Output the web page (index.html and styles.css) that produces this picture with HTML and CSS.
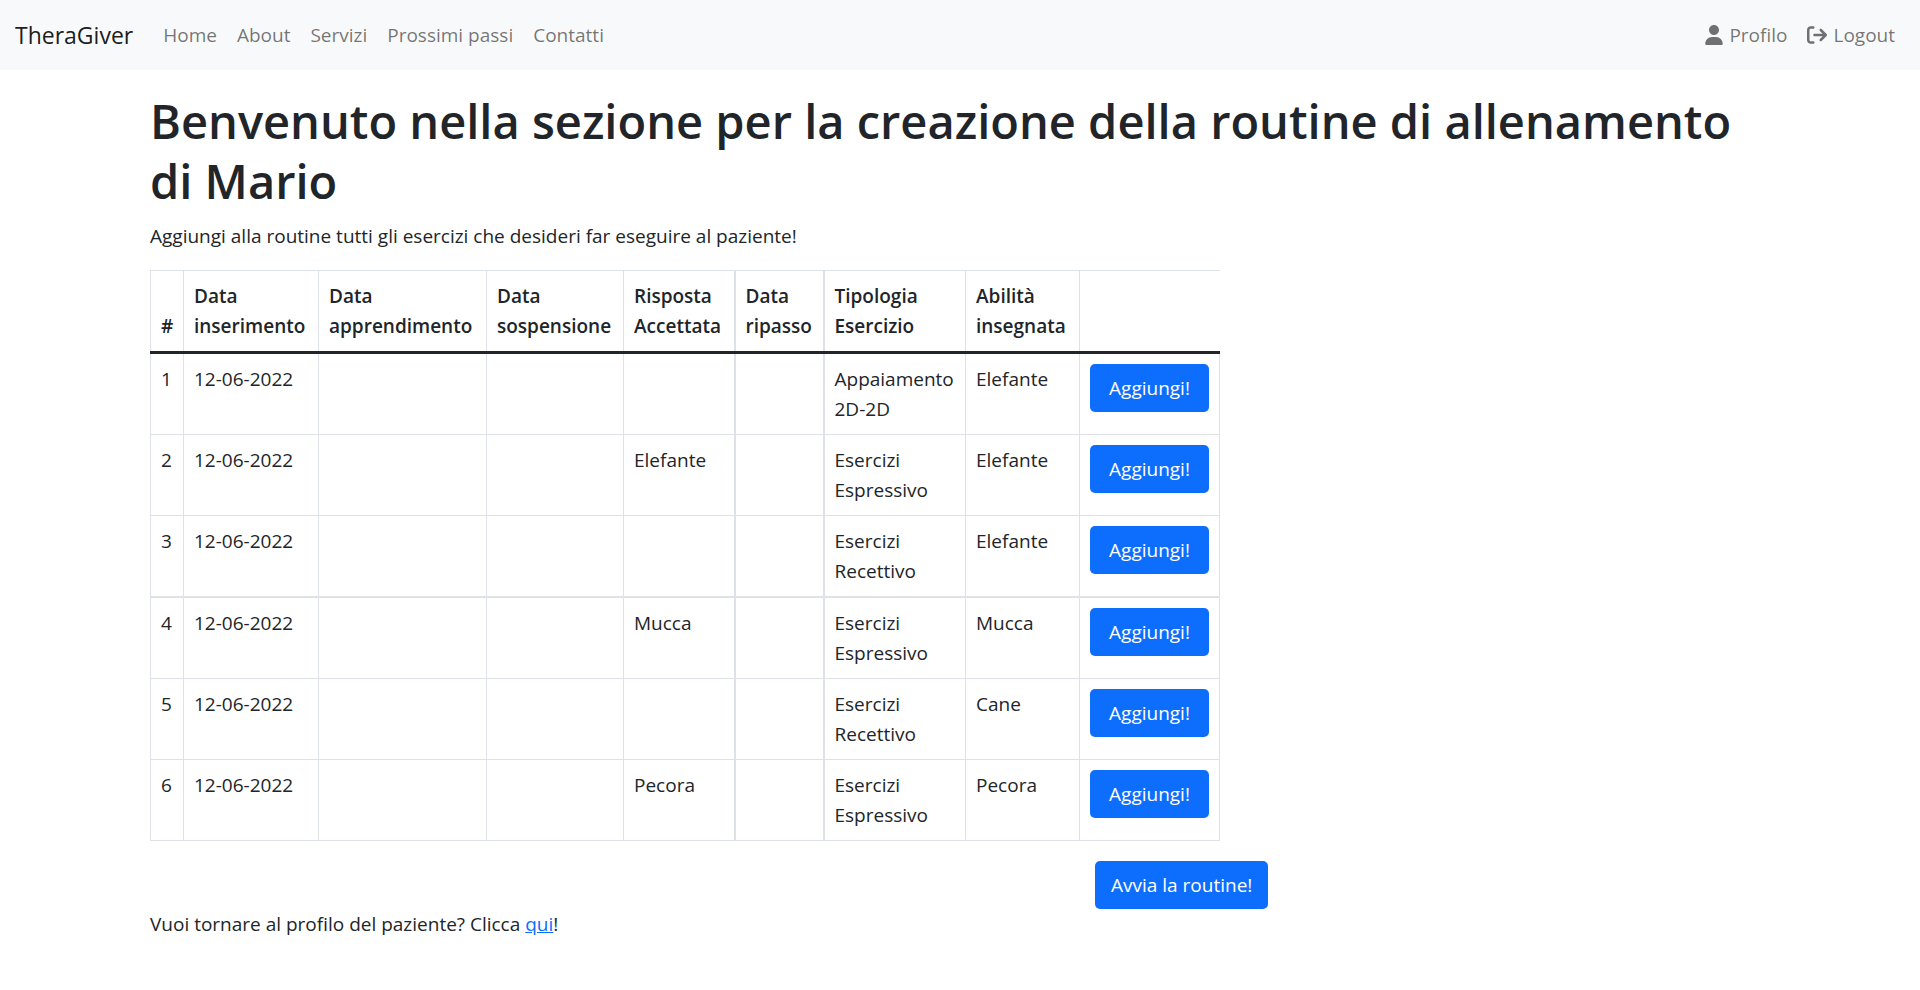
FILE: index.html
```html
<!DOCTYPE html>
<html lang="it">
<head>
<meta charset="utf-8">
<meta name="viewport" content="width=device-width, initial-scale=1">
<title>TheraGiver</title>
<link rel="stylesheet" href="styles.css">
</head>
<body>
<nav class="navbar">
  <a class="brand" href="#">TheraGiver</a>
  <ul class="nav-list">
    <li><a class="nav-link" href="#">Home</a></li>
    <li><a class="nav-link" href="#">About</a></li>
    <li><a class="nav-link" href="#">Servizi</a></li>
    <li><a class="nav-link" href="#">Prossimi passi</a></li>
    <li><a class="nav-link" href="#">Contatti</a></li>
  </ul>
  <ul class="nav-list nav-end">
    <li><a class="nav-link" href="#"><svg class="icon icon-user" viewBox="0 0 448 512" aria-hidden="true"><path d="M224 256c70.7 0 128-57.3 128-128S294.700 0 224 0 96 57.300 96 128s57.300 128 128 128zm50.700 48H173.300C77.600 304 0 381.600 0 477.300 0 496.500 15.500 512 34.700 512h378.600c19.200 0 34.700-15.500 34.700-34.700C448 381.600 370.400 304 274.700 304z"/></svg>Profilo</a></li>
    <li><a class="nav-link" href="#"><svg class="icon icon-logout" viewBox="0 0 512 512" aria-hidden="true"><path d="M160 416H96c-17.700 0-32-14.300-32-32V128c0-17.700 14.300-32 32-32h64c17.700 0 32-14.300 32-32s-14.300-32-32-32H96C43 32 0 75 0 128v256c0 53 43 96 96 96h64c17.700 0 32-14.300 32-32s-14.300-32-32-32zM502.600 233.400l-128-128c-12.500-12.500-32.800-12.500-45.300 0s-12.500 32.800 0 45.300L402.800 224H192c-17.700 0-32 14.300-32 32s14.300 32 32 32h210.800l-73.400 73.400c-12.500 12.500-12.500 32.800 0 45.300s32.800 12.500 45.300 0l128-128c12.400-12.600 12.400-32.800-.1-45.300z"/></svg>Logout</a></li>
  </ul>
</nav>
<main class="container">
  <h1 class="title">Benvenuto nella sezione per la creazione della routine di allenamento di Mario</h1>
  <p class="lead">Aggiungi alla routine tutti gli esercizi che desideri far eseguire al paziente!</p>
  <table class="exercises">
    <colgroup>
      <col class="c-num"><col class="c-added"><col class="c-learned"><col class="c-paused"><col class="c-answer"><col class="c-review"><col class="c-type"><col class="c-skill"><col class="c-action">
    </colgroup>
    <thead>
      <tr><th scope="col">#</th><th scope="col">Data inserimento</th><th scope="col">Data apprendimento</th><th scope="col">Data sospensione</th><th scope="col">Risposta Accettata</th><th scope="col">Data ripasso</th><th scope="col">Tipologia Esercizio</th><th scope="col">Abilità insegnata</th><td></td></tr>
    </thead>
    <tbody>
      <tr><td>1</td><td>12-06-2022</td><td></td><td></td><td></td><td></td><td>Appaiamento 2D-2D</td><td>Elefante</td><td><button class="btn" type="button">Aggiungi!</button></td></tr>
      <tr><td>2</td><td>12-06-2022</td><td></td><td></td><td>Elefante</td><td></td><td>Esercizi Espressivo</td><td>Elefante</td><td><button class="btn" type="button">Aggiungi!</button></td></tr>
      <tr class="group-end"><td>3</td><td>12-06-2022</td><td></td><td></td><td></td><td></td><td>Esercizi Recettivo</td><td>Elefante</td><td><button class="btn" type="button">Aggiungi!</button></td></tr>
      <tr><td>4</td><td>12-06-2022</td><td></td><td></td><td>Mucca</td><td></td><td>Esercizi Espressivo</td><td>Mucca</td><td><button class="btn" type="button">Aggiungi!</button></td></tr>
      <tr><td>5</td><td>12-06-2022</td><td></td><td></td><td></td><td></td><td>Esercizi Recettivo</td><td>Cane</td><td><button class="btn" type="button">Aggiungi!</button></td></tr>
      <tr><td>6</td><td>12-06-2022</td><td></td><td></td><td>Pecora</td><td></td><td>Esercizi Espressivo</td><td>Pecora</td><td><button class="btn" type="button">Aggiungi!</button></td></tr>
    </tbody>
  </table>
  <div class="start"><button class="btn" type="button">Avvia la routine!</button></div>
  <p class="back">Vuoi tornare al profilo del paziente? Clicca <a class="link" href="#">qui</a>!</p>
</main>
</body>
</html>
```

FILE: styles.css
```css
*, *::before, *::after { box-sizing: border-box; }

body {
  margin: 0;
  background: #fff;
  color: #212529;
  font-family: "Open Sans", "Noto Sans", sans-serif;
  font-size: 19px;
  line-height: 30px;
}

.navbar {
  display: flex;
  align-items: center;
  padding: 10px 15px;
  background: #f8f9fa;
}

.brand {
  margin-right: 20px;
  padding: 6px 0;
  color: rgba(0, 0, 0, .9);
  font-size: 23px;
  line-height: 38px;
  text-decoration: none;
}

.nav-list {
  display: flex;
  margin: 0;
  padding: 0;
  list-style: none;
}

.nav-end { margin-left: auto; }

.nav-link {
  display: flex;
  align-items: center;
  gap: 6px;
  padding: 10px;
  color: rgba(0, 0, 0, .55);
  text-decoration: none;
}

.icon { height: 20px; fill: currentColor; }
.icon-user { width: 18px; }
.icon-logout { width: 20px; }

.container {
  max-width: 1650px;
  margin: 0 auto;
  padding: 21px 15px 0;
}

.title {
  margin: 0 0 10px;
  font-size: 47px;
  font-weight: 600;
  line-height: 60px;
}

.lead { margin: 0 0 19px; }

.exercises {
  width: 1070px;
  table-layout: fixed;
  border-collapse: collapse;
}

.c-num { width: 33px; }
.c-added { width: 135px; }
.c-learned { width: 168px; }
.c-paused { width: 137px; }
.c-answer { width: 111px; }
.c-review { width: 89px; }
.c-type { width: 142px; }
.c-skill { width: 114px; }
.c-action { width: 140px; }

.exercises th,
.exercises td {
  padding: 10px 0 10px 10px;
  border: 1px solid #dee2e6;
  text-align: left;
  vertical-align: top;
}

.exercises th:nth-child(5), .exercises td:nth-child(5),
.exercises th:nth-child(6), .exercises td:nth-child(6) { border-right-width: 2px; }

.exercises thead th,
.exercises thead td {
  border-bottom: 3px solid #212529;
  font-weight: 600;
  vertical-align: bottom;
}

.exercises thead td:last-child { border-right: 0; }
.exercises td:last-child { padding-right: 10px; }
.exercises .group-end td { border-bottom-width: 2px; }

.btn {
  display: block;
  padding: 9px 16px;
  border: 0;
  border-radius: 5px;
  background: #0d6efd;
  color: #fff;
  font: inherit;
  white-space: nowrap;
}

.exercises .btn { width: 100%; }

.start {
  display: flex;
  margin-top: 20px;
  padding-left: 945px;
}

.back { margin: 0; }
.link { color: #0d6efd; }
```
